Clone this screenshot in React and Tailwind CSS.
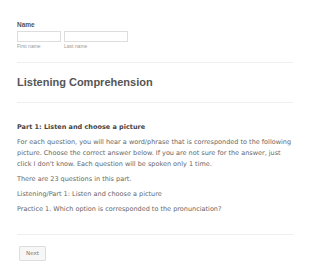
import React from 'react';

const App = () => {
  return (
    <div className="min-h-screen bg-white px-[17px] pt-[20px] text-[#555]">
      {/* Name field */}
      <div className="pb-[12px] border-b border-[#eee]">
        <label className="block text-[6.5px] font-bold text-[#555] leading-[9px] mb-[2px]" style={{ fontFamily: '"Liberation Sans", Arial, sans-serif' }}>
          Name
        </label>
        <div className="flex gap-[3px]" style={{ fontFamily: '"Liberation Sans", Arial, sans-serif' }}>
          <div className="flex flex-col">
            <input className="w-[44px] h-[11px] border border-[#ddd] bg-white outline-none" />
            <span className="text-[5px] leading-[8px] text-[#999]">First name</span>
          </div>
          <div className="flex flex-col">
            <input className="w-[64px] h-[11px] border border-[#ddd] bg-white outline-none" />
            <span className="text-[5px] leading-[8px] text-[#999]">Last name</span>
          </div>
        </div>
      </div>

      {/* Section title */}
      <div className="pt-[13px] pb-[14px] border-b border-[#eee]">
        <h2 className="text-[11px] font-bold text-[#555] leading-[12px]" style={{ fontFamily: '"Liberation Sans", Arial, sans-serif' }}>
          Listening Comprehension
        </h2>
      </div>

      {/* Description */}
      <div className="pt-[19px] pb-[19px] border-b border-[#eee] text-[6.5px] leading-[11px] text-[#666]" style={{ fontFamily: '"DejaVu Sans", Verdana, sans-serif' }}>
        <p className="font-bold text-[#444] mb-[4px]">Part 1: Listen and choose a picture</p>
        <p className="mb-[4px]">
          For each question, you will hear a word/phrase that is corresponded to the following picture. Choose the correct answer below. If you are not sure for the answer, just click I don't know. Each question will be spoken only 1 time.
        </p>
        <p className="mb-[4px]">There are 23 questions in this part.</p>
        <p className="mb-[4px]">Listening/Part 1: Listen and choose a picture</p>
        <p>Practice 1. Which option is corresponded to the pronunciation?</p>
      </div>

      {/* Next button */}
      <div className="pt-[11px] pl-[2px]">
        <button className="w-[27px] h-[15px] flex items-center justify-center bg-[#f7f7f7] border border-[#ddd] rounded-[1px] text-[5.5px] text-[#777]" style={{ fontFamily: '"DejaVu Sans", Verdana, sans-serif' }}>
          Next
        </button>
      </div>
    </div>
  );
};

export default App;
